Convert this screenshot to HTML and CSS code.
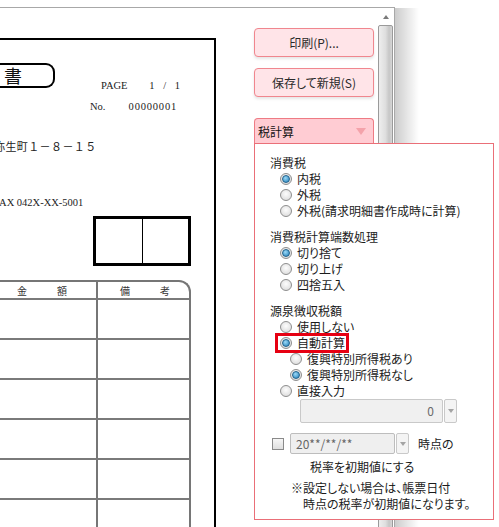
FILE: index.html
```html
<!DOCTYPE html>
<html lang="ja">
<head>
  <meta charset="UTF-8">
  <title>請求書 プレビュー</title>
  <link rel="stylesheet" href="styles.css">
</head>
<body>
<div class="window">
  <div class="paper">
    <div class="page">
      <div class="page-head">
        <div class="doc-title">書</div>
        <div class="page-info">
          <div class="info-row"><span>PAGE</span><span class="info-value">1 / 1</span></div>
          <div class="info-row info-no"><span>No.</span><span class="info-value">00000001</span></div>
        </div>
      </div>
      <div class="addr">弥生町１－８－１５</div>
      <div class="fax">FAX 042X-XX-5001</div>
      <div class="stamps"><div class="stamp"></div><div class="stamp"></div></div>
      <div class="items">
        <div class="items-row items-head">
          <div class="cell cell-amount"><span>金</span><span>額</span></div>
          <div class="cell cell-note"><span>備</span><span>考</span></div>
        </div>
        <div class="items-row"><div class="cell"></div><div class="cell"></div></div>
        <div class="items-row"><div class="cell"></div><div class="cell"></div></div>
        <div class="items-row"><div class="cell"></div><div class="cell"></div></div>
        <div class="items-row"><div class="cell"></div><div class="cell"></div></div>
        <div class="items-row"><div class="cell"></div><div class="cell"></div></div>
        <div class="items-row"><div class="cell"></div><div class="cell"></div></div>
      </div>
    </div>
  </div>

  <div class="side">
    <button class="btn">印刷(P)...</button>
    <button class="btn">保存して新規(S)</button>

    <div class="tax-group">
      <div class="tax-head">税計算<span class="tax-arrow"></span></div>
      <div class="tax-panel">
        <div class="group-title">消費税</div>
        <div class="opt"><span class="radio on"></span>内税</div>
        <div class="opt"><span class="radio"></span>外税</div>
        <div class="opt"><span class="radio"></span>外税(請求明細書作成時に計算)</div>

        <div class="group-title">消費税計算端数処理</div>
        <div class="opt"><span class="radio on"></span>切り捨て</div>
        <div class="opt"><span class="radio"></span>切り上げ</div>
        <div class="opt"><span class="radio"></span>四捨五入</div>

        <div class="group-title">源泉徴収税額</div>
        <div class="opt"><span class="radio"></span>使用しない</div>
        <div class="opt"><span class="hl"><span class="radio on"></span>自動計算</span></div>
        <div class="opt sub"><span class="radio"></span>復興特別所得税あり</div>
        <div class="opt sub"><span class="radio on"></span>復興特別所得税なし</div>
        <div class="opt"><span class="radio"></span>直接入力</div>

        <div class="num-row">
          <div class="num-box">0</div>
          <div class="drop"></div>
        </div>

        <div class="date-row">
          <span class="check"></span>
          <div class="combo-box">20**/**/**</div>
          <div class="drop"></div>
          <span class="date-label">時点の</span>
        </div>
        <div class="date-note">税率を初期値にする</div>
        <div class="hint">※設定しない場合は、帳票日付</div>
        <div class="hint hint-2">時点の税率が初期値になります。</div>
      </div>
    </div>
  </div>

  <div class="scrollbar">
    <div class="scroll-up"></div>
    <div class="scroll-thumb"></div>
  </div>
</div>
</body>
</html>
```

FILE: styles.css
```css
* {
  box-sizing: border-box;
}
body {
  margin: 0;
  background: #fff;
  font-family: "Noto Sans CJK JP", sans-serif;
  color: #1b1b1b;
  overflow: hidden;
}
.window {
  position: relative;
  display: flex;
  width: 395px;
  height: 530px;
  margin-top: 7px;
  border-top: 1px solid #a8a8a8;
  border-right: 1px solid #a8a8a8;
}
.window::after {
  content: "";
  position: absolute;
  top: 0;
  bottom: 0;
  left: calc(100% + 1px);
  width: 24px;
  background: linear-gradient(to right, rgba(0,0,0,0.2), rgba(0,0,0,0));
}

/* document preview */
.paper {
  width: 246px;
  flex: none;
  overflow: hidden;
  padding-top: 30px;
}
.page {
  width: 216px;
  height: 600px;
  border-top: 2px solid #000;
  border-right: 2px solid #000;
  font-family: "Liberation Serif", "Noto Sans CJK JP", serif;
  color: #222;
}
.page-head {
  display: flex;
  align-items: flex-start;
}
.doc-title {
  width: 55px;
  height: 25px;
  margin-top: 23px;
  padding-left: 4px;
  border: 2px solid #000;
  border-left: none;
  border-radius: 0 9px 9px 0;
  font-family: "Noto Sans CJK JP", sans-serif;
  font-size: 18px;
  line-height: 20px;
  color: #111;
}
.page-info {
  width: 125px;
  margin-top: 35px;
  font-size: 10.5px;
  line-height: 21px;
}
.info-row {
  display: flex;
  justify-content: space-between;
  padding-left: 46px;
}
.info-value {
  word-spacing: 6px;
}
.info-no {
  padding-left: 35px;
  padding-right: 3px;
}
.info-no .info-value {
  letter-spacing: 0.8px;
}
.addr {
  margin: 23px 0 0 -6px;
  font-size: 11px;
  line-height: 14px;
  letter-spacing: 0.4px;
}
.fax {
  margin: 42px 0 0 -6px;
  font-size: 10.5px;
  line-height: 14px;
}
.stamps {
  display: flex;
  width: 98px;
  height: 50px;
  margin: 6px 0 0 93px;
  border: 3px solid #000;
}
.stamp {
  flex: 1;
}
.stamp:first-child {
  border-right: 1px solid #000;
}
.items {
  width: 211px;
  margin: 14px 0 0 -20px;
  border-top: 2px solid #767676;
  border-right: 2px solid #767676;
  border-top-right-radius: 12px;
}
.items-row {
  display: grid;
  grid-template-columns: 118px 1fr;
  height: 40px;
  border-bottom: 2px solid #7a7a7a;
}
.items-head {
  height: 18px;
}
.cell:first-child {
  border-right: 2px solid #767676;
}
.items-head .cell {
  display: flex;
  justify-content: center;
  gap: 30px;
  padding-top: 2px;
  font-family: "Noto Sans CJK JP", sans-serif;
  font-size: 10px;
  line-height: 14px;
  color: #333;
}
.items-head .cell-amount {
  padding-left: 8px;
}
.items-head .cell-note {
  padding-left: 3px;
}

/* side buttons */
.side {
  width: 120px;
  flex: none;
  margin-left: 8px;
  padding-top: 20px;
}
.btn {
  display: block;
  width: 100%;
  height: 29px;
  margin-bottom: 11px;
  border: 1px solid #f0868e;
  border-radius: 4px;
  background: #ffe4e8;
  box-shadow: 0 2px 3px rgba(0,0,0,0.1);
  font-family: "Noto Sans CJK JP", sans-serif;
  font-size: 12px;
  color: #2a2a2a;
  font-feature-settings: "palt";
}
.tax-group {
  position: relative;
  margin-top: 21px;
}
.tax-head {
  display: flex;
  justify-content: space-between;
  align-items: center;
  height: 25px;
  padding: 0 7px 0 3px;
  border: 1px solid #ee7b84;
  border-bottom: none;
  border-radius: 4px 4px 0 0;
  background: #ffccd3;
  font-size: 12px;
  color: #111;
}
.tax-arrow {
  border-left: 5px solid transparent;
  border-right: 5px solid transparent;
  border-top: 7px solid #f4a2aa;
}
.tax-panel {
  position: absolute;
  top: 100%;
  left: 0;
  z-index: 2;
  width: 240px;
  height: 377px;
  padding: 11px 0 0 15px;
  border: 1px solid #ea6f78;
  background: #fff;
  font-size: 12px;
  line-height: 16px;
  font-feature-settings: "palt";
}
.group-title {
  height: 16px;
}
.opt + .group-title {
  margin-top: 10px;
}
.opt {
  display: flex;
  align-items: center;
  gap: 5px;
  height: 16px;
  padding-left: 10px;
  white-space: nowrap;
}
.opt.sub {
  padding-left: 20px;
}
.hl {
  display: inline-flex;
  align-items: center;
  gap: 5px;
  margin-left: -3px;
  padding: 0 2px 0 3px;
  outline: 3px solid #e60012;
  outline-offset: -1px;
}
.radio {
  display: grid;
  place-items: center;
  width: 12px;
  height: 12px;
  flex: none;
  border: 1px solid #8e8e8e;
  border-radius: 50%;
  background: radial-gradient(circle at 50% 40%, #fdfdfd, #d6d6d6);
}
.radio.on::after {
  content: "";
  width: 6px;
  height: 6px;
  border-radius: 50%;
  border: 1px solid #22618a;
  background: radial-gradient(circle at 40% 35%, #9bd9f7, #1f7db8);
}
.num-row {
  display: flex;
  gap: 1px;
  height: 24px;
  margin-left: 30px;
}
.num-box {
  width: 143px;
  padding-right: 8px;
  border: 1px solid #c9c9c9;
  border-radius: 2px;
  background: #f0f0f0;
  color: #6a6a6a;
  text-align: right;
  line-height: 22px;
}
.drop {
  display: grid;
  place-items: center;
  width: 13px;
  border: 1px solid #c9c9c9;
  border-radius: 2px;
  background: #f4f4f4;
}
.drop::after {
  content: "";
  border-left: 3px solid transparent;
  border-right: 3px solid transparent;
  border-top: 4px solid #a4a4a4;
}
.date-row {
  display: flex;
  align-items: center;
  gap: 1px;
  height: 21px;
  margin-top: 10px;
}
.date-row .drop {
  height: 21px;
}
.check {
  width: 12px;
  height: 12px;
  margin: 0 5px 0 2px;
  border: 1px solid #8a8a8a;
  background: linear-gradient(#f6f6f6, #dedede);
}
.combo-box {
  width: 105px;
  height: 21px;
  padding-left: 5px;
  border: 1px solid #bdbdbd;
  border-radius: 2px;
  background: #efefef;
  color: #666;
  line-height: 19px;
}
.date-label {
  margin-left: 8px;
}
.date-note {
  margin-top: 5px;
  padding-left: 40px;
}
.hint {
  margin-top: 5px;
  padding-left: 21px;
}
.hint-2 {
  margin-top: 0;
  padding-left: 33px;
}

/* scrollbar */
.scrollbar {
  display: flex;
  flex-direction: column;
  width: 15px;
  flex: none;
  margin-left: 4px;
}
.scroll-up {
  display: flex;
  justify-content: center;
  align-items: center;
  height: 17px;
}
.scroll-up::before {
  content: "";
  border-left: 3px solid transparent;
  border-right: 3px solid transparent;
  border-bottom: 4px solid #7a7a7a;
}
.scroll-thumb {
  flex: 1;
  border: 1px solid #9a9a9a;
  border-radius: 2px 2px 0 0;
  background: linear-gradient(to right, #eeeeee, #dedede 50%, #c6c6c6 78%, #d6d6d6);
}
```
